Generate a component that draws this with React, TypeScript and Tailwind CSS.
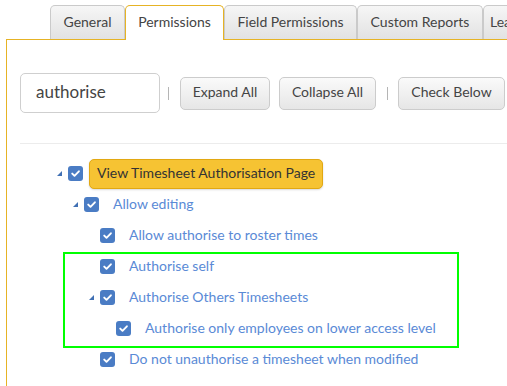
import React from "react";

const Check = () => (
  <span className="flex w-[15px] h-[15px] shrink-0 items-center justify-center rounded-[3px] bg-[#4a7cc4]">
    <svg width="11" height="11" viewBox="0 0 11 11">
      <path d="M2.2 5.6 L4.5 7.8 L8.9 3.3" fill="none" stroke="#fff" strokeWidth="1.9" strokeLinecap="round" strokeLinejoin="round" />
    </svg>
  </span>
);

const Tri = ({ show }: { show: boolean }) => (
  <span className="flex w-[11px] shrink-0 items-center">
    {show ? (
      <svg width="5" height="5" viewBox="0 0 5 5">
        <polygon points="5,0 5,5 0,5" fill="#4070b4" />
      </svg>
    ) : null}
  </span>
);

type Row = { label: string; level: number; tri: boolean; hl?: boolean };

const rows: Row[] = [
  { label: "View Timesheet Authorisation Page", level: 0, tri: true, hl: true },
  { label: "Allow editing", level: 1, tri: true },
  { label: "Allow authorise to roster times", level: 2, tri: false },
  { label: "Authorise self", level: 2, tri: false },
  { label: "Authorise Others Timesheets", level: 2, tri: true },
  { label: "Authorise only employees on lower access level", level: 3, tri: false },
  { label: "Do not unauthorise a timesheet when modified", level: 2, tri: false },
];

const padClass = ["pl-[37px]", "pl-[53px]", "pl-[69px]", "pl-[85px]"];

const tabs = [
  { label: "General", w: "w-[75px] justify-center" },
  { label: "Permissions", w: "w-[99px] justify-center", active: true },
  { label: "Field Permissions", w: "w-[133px] justify-center" },
  { label: "Custom Reports", w: "w-[126px] justify-center" },
  { label: "Leave", w: "w-[70px] justify-start pl-[6px]" },
];

export default function App() {
  return (
    <div
      className="w-[507px] h-[386px] overflow-hidden bg-white text-[#444]"
      style={{ fontFamily: "Lato, 'Open Sans', sans-serif" }}
    >
      <div className="flex items-end h-[39px] pl-[50px] pt-[5px]">
        {tabs.map((t) =>
          t.active ? (
            <div
              key={t.label}
              className={`${t.w} relative z-10 -mb-px h-[35px] shrink-0 flex items-center pb-[3px] rounded-t-[5px] border border-b-0 border-[#e6b325] bg-white text-[14px] text-[#444]`}
            >
              {t.label}
            </div>
          ) : (
            <div
              key={t.label}
              className={`${t.w} h-[34px] shrink-0 flex items-center pb-[2px] rounded-t-[5px] border border-b-0 border-[#cacaca] bg-gradient-to-b from-[#f6f6f6] to-[#e2e2e2] text-[14px] text-[#444] whitespace-nowrap`}
            >
              {t.label}
            </div>
          )
        )}
      </div>
      <div className="ml-[6px] w-[700px] h-[400px] border-l border-t border-[#e6b325] pl-[13px] pt-[33px]">
        <div className="flex items-center">
          <div className="w-[140px] h-[40px] shrink-0 flex items-center rounded-[5px] border border-[#cfcfcf] pl-[15px] pb-[3px] text-[17px] text-[#444]">
            authorise
          </div>
          <div className="ml-[8px] w-px h-[13px] bg-[#b5b5b5]" />
          <button className="ml-[11px] w-[90px] h-[33px] shrink-0 pb-[3px] rounded-[5px] border border-[#cccccc] bg-gradient-to-b from-[#fafafa] to-[#e6e6e6] text-[14px] text-[#444]">
            Expand All
          </button>
          <button className="ml-[9px] w-[97px] h-[33px] shrink-0 pb-[3px] rounded-[5px] border border-[#cccccc] bg-gradient-to-b from-[#fafafa] to-[#e6e6e6] text-[14px] text-[#444]">
            Collapse All
          </button>
          <div className="ml-[11px] w-px h-[13px] bg-[#b5b5b5]" />
          <button className="ml-[10px] w-[107px] h-[33px] shrink-0 pb-[3px] rounded-[5px] border border-[#cccccc] bg-gradient-to-b from-[#fafafa] to-[#e6e6e6] text-[14px] text-[#444]">
            Check Below
          </button>
        </div>
        <div className="mt-[30px] border-t border-[#ececec]" />
        <div className="relative mt-[14px]">
          {rows.map((r) => (
            <div key={r.label} className={`flex h-[31px] items-center ${padClass[r.level]}`}>
              <Tri show={r.tri} />
              <Check />
              {r.hl ? (
                <span className="ml-[6px] flex h-[30px] items-center pb-[2px] rounded-[5px] border border-[#e2a812] bg-[#f6c333] px-[7px] text-[14px] text-[#333] shadow-[0_1px_2px_rgba(0,0,0,0.15)] whitespace-nowrap">
                  {r.label}
                </span>
              ) : (
                <span className="ml-[14px] pb-[2px] text-[14px] text-[#5a8ad6] whitespace-nowrap">{r.label}</span>
              )}
            </div>
          ))}
          <div className="pointer-events-none absolute left-[43px] top-[94px] w-[396px] h-[96px] border-2 border-[#00ff00]" />
        </div>
      </div>
    </div>
  );
}
